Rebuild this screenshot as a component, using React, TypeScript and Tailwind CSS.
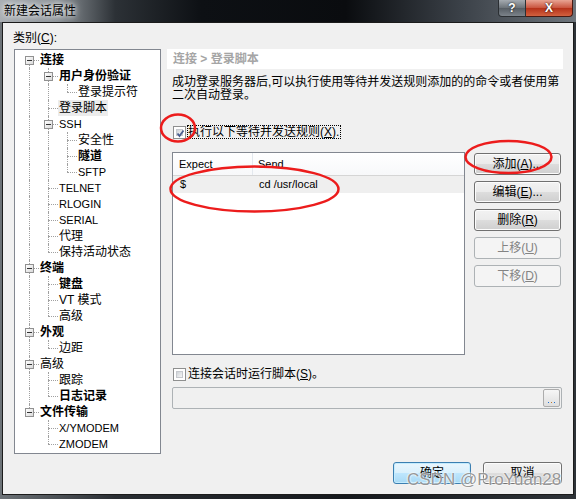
import React from 'react';

type TreeNode = { label: string; bold?: boolean; sel?: boolean; kids?: TreeNode[] };

const tree: TreeNode[] = [
  {
    label: '连接',
    bold: true,
    kids: [
      { label: '用户身份验证', bold: true, kids: [{ label: '登录提示符' }] },
      { label: '登录脚本', sel: true },
      { label: 'SSH', kids: [{ label: '安全性' }, { label: '隧道', bold: true }, { label: 'SFTP' }] },
      { label: 'TELNET' },
      { label: 'RLOGIN' },
      { label: 'SERIAL' },
      { label: '代理' },
      { label: '保持活动状态' },
    ],
  },
  { label: '终端', bold: true, kids: [{ label: '键盘', bold: true }, { label: 'VT 模式' }, { label: '高级' }] },
  { label: '外观', bold: true, kids: [{ label: '边距' }] },
  { label: '高级', kids: [{ label: '跟踪' }, { label: '日志记录', bold: true }] },
  { label: '文件传输', bold: true, kids: [{ label: 'X/YMODEM' }, { label: 'ZMODEM' }] },
];

type Row = { node: TreeNode; trail: boolean[]; first: boolean; last: boolean };

function flatten(nodes: TreeNode[], trail: boolean[], out: Row[]) {
  nodes.forEach((n, i) => {
    const last = i === nodes.length - 1;
    out.push({ node: n, trail, first: trail.length === 0 && i === 0, last });
    if (n.kids) flatten(n.kids, [...trail, !last], out);
  });
  return out;
}

const rows = flatten(tree, [], []);

function TreeRow({ row }: { row: Row }) {
  const { node, trail, first, last } = row;
  const latin = /^[\x00-\x7f]+$/.test(node.label);
  return (
    <div className="flex h-4 items-center">
      {trail.map((cont, i) => (
        <div key={i} className="relative w-[19px] h-4 shrink-0">
          {cont && <div className="absolute left-[9px] top-0 h-4 border-l border-dotted border-[#a0a0a0]" />}
        </div>
      ))}
      <div className="relative w-[19px] h-4 shrink-0">
        {!first && <div className="absolute left-[9px] top-0 h-2 border-l border-dotted border-[#a0a0a0]" />}
        {!last && <div className="absolute left-[9px] top-2 h-2 border-l border-dotted border-[#a0a0a0]" />}
        <div className="absolute left-[9px] top-2 w-[10px] border-t border-dotted border-[#a0a0a0]" />
        {node.kids && (
          <div className="absolute left-[5px] top-[4px] w-[9px] h-[9px] border border-[#919191] bg-[linear-gradient(135deg,#ffffff,#d9d9d9)] flex items-center justify-center">
            <div className="w-[5px] h-px bg-[#333]" />
          </div>
        )}
      </div>
      <span
        className={`px-[1px] leading-4 whitespace-nowrap text-black ${latin ? 'text-[11px]' : 'text-[12px]'} ${
          node.bold ? 'font-bold' : ''
        } ${node.sel ? 'bg-[#ececec]' : ''}`}
      >
        {node.label}
      </span>
    </div>
  );
}

function WinButton({
  children,
  disabled,
  focused,
  className = '',
}: {
  children: React.ReactNode;
  disabled?: boolean;
  focused?: boolean;
  className?: string;
}) {
  const look = disabled
    ? 'border-[#adb2b5] bg-[#f4f4f4] text-[#838383]'
    : focused
    ? 'border-[#3c7fb1] bg-[linear-gradient(#eaf6fd_0%,#d9f0fc_50%,#bee6fd_51%,#a7d9f5_100%)] text-black shadow-[inset_0_0_0_1px_#c4ecfe]'
    : 'border-[#707070] bg-[linear-gradient(#f2f2f2_0%,#ebebeb_50%,#dddddd_51%,#cfcfcf_100%)] text-black shadow-[inset_0_0_0_1px_#fcfcfc]';
  return (
    <div className={`flex items-center justify-center h-[22px] rounded-[3px] border text-[12px] ${look} ${className}`}>
      {children}
    </div>
  );
}

function CheckBox({ checked }: { checked?: boolean }) {
  return (
    <div className="w-[13px] h-[13px] border border-[#8e8f8f] bg-white p-[2px] shrink-0">
      <div className="relative w-full h-full border border-[#c6c9ce] bg-[linear-gradient(135deg,#cfd3d8,#f6f6f6)]">
        {checked && (
          <svg className="absolute -left-[2px] -top-[2px]" width="11" height="11" viewBox="0 0 11 11">
            <path d="M2.5 5.5 L4.5 8 L8.5 2.5" fill="none" stroke="#4a5d8f" strokeWidth="1.8" />
          </svg>
        )}
      </div>
    </div>
  );
}

function Mn({ k }: { k: string }) {
  return (
    <span>
      (<span className="underline underline-offset-1">{k}</span>)
    </span>
  );
}

export default function App() {
  return (
    <div className="relative w-[576px] h-[499px] flex flex-col bg-[linear-gradient(90deg,#6d7378,#2a2e33_20%,#15181c_60%,#2e3338)] [font-family:'Liberation_Sans','Noto_Sans_CJK_SC',sans-serif] overflow-hidden">
      {/* title bar */}
      <div className="h-[22px] shrink-0 flex items-start bg-[linear-gradient(90deg,#a9aeb3_0%,#8b9196_10%,#2c3136_20%,#0d1014_35%,#0a0c0f_60%,#3b4148_80%,#6e757c_100%)]">
        <span className="ml-[4px] mt-[3px] text-[12px] leading-4 text-black [text-shadow:0_0_5px_#fff,0_0_9px_#fff]">
          新建会话属性
        </span>
        <div className="ml-auto mr-[3px] flex">
          <div className="w-[28px] h-[17px] flex items-center justify-center rounded-bl-[4px] border border-t-0 border-[#2b2f33] bg-[linear-gradient(#a4aab0,#6b7278_50%,#565d64_51%,#7c838a)] text-white text-[12px] font-bold [text-shadow:0_0_2px_#000]">
            ?
          </div>
          <div className="w-[47px] h-[17px] flex items-center justify-center rounded-br-[4px] border border-t-0 border-l-0 border-[#4a1a12] bg-[linear-gradient(#e8a493,#c9533d_50%,#b53119_51%,#d2613f)] text-white text-[12px] font-bold [text-shadow:0_0_2px_#000]">
            X
          </div>
        </div>
      </div>

      {/* body */}
      <div className="flex-1 mx-[2px] mb-[4px] border border-[#1b1b1b] bg-[#f0f0f0] flex flex-col pt-[7px] pl-[11px] pr-[10px] pb-[10px]">
        <div className="flex gap-[6px] h-[424px]">
          {/* categories */}
          <div className="w-[147px] flex flex-col">
            <div className="h-[19px] -ml-px text-[12px] leading-4 text-black">
              类别<Mn k="C" />:
            </div>
            <div className="h-[405px] border border-[#828790] bg-white pt-[2px] pl-[5px]">
              {rows.map((r, i) => (
                <TreeRow key={i} row={r} />
              ))}
            </div>
          </div>

          {/* page */}
          <div className="w-[396px] flex flex-col pt-[19px]">
            <div className="h-[20px] bg-white pl-[6px] text-[12px] leading-[20px] font-bold text-[#a5a5a5]">
              连接 &gt; 登录脚本
            </div>
            <div className="mt-[7px] pl-[5px] text-[12px] leading-[13px] text-black whitespace-nowrap">
              成功登录服务器后,可以执行使用等待并发送规则添加的的命令或者使用第
              <br />
              二次自动登录。
            </div>
            <div className="mt-[22px] h-4 pl-[6px] flex items-center">
              <CheckBox checked />
              <span className="ml-px h-[14px] border border-dotted border-black text-[12px] leading-[12px] text-black pr-px">
                执行以下等待并发送规则<Mn k="X" />.
              </span>
            </div>

            <div className="mt-[12px] flex gap-[9px]">
              <div className="ml-[5px] w-[293px] h-[203px] border border-[#828790] bg-white">
                <div className="h-[23px] flex border-b border-[#d5d5d5] bg-[linear-gradient(#ffffff,#f7f8fa)] text-[11px] text-black">
                  <div className="w-[80px] pl-[6px] flex items-center border-r border-[#e3e8ee]">Expect</div>
                  <div className="pl-[5px] flex items-center">Send</div>
                </div>
                <div className="h-[17px] flex items-center bg-[#efefef] text-[11px] text-black">
                  <div className="w-[80px] pl-[7px]">$</div>
                  <div className="pl-[6px]">cd /usr/local</div>
                </div>
              </div>
              <div className="w-[87px] flex flex-col gap-[6px] mt-px">
                <WinButton>
                  添加<Mn k="A" />...
                </WinButton>
                <WinButton>
                  编辑<Mn k="E" />...
                </WinButton>
                <WinButton>
                  删除<Mn k="R" />
                </WinButton>
                <WinButton disabled>
                  上移<Mn k="U" />
                </WinButton>
                <WinButton disabled>
                  下移<Mn k="D" />
                </WinButton>
              </div>
            </div>

            <div className="mt-[11px] h-4 pl-[6px] flex items-center">
              <CheckBox />
              <span className="ml-[2px] text-[12px] leading-4 text-black">
                连接会话时运行脚本<Mn k="S" />。
              </span>
            </div>
            <div className="mt-[5px] ml-[5px] w-[390px] h-[22px] border border-[#adb2b5] rounded-[2px] bg-[#f0f0f0] flex items-center justify-end pr-px">
              <div className="w-[17px] h-[18px] border border-[#acacac] rounded-[2px] bg-[linear-gradient(#f6f6f6,#dedede)] flex items-end justify-center pb-[3px] gap-[2px]">
                <div className="w-px h-px bg-[#1e6fd0]" />
                <div className="w-px h-px bg-[#c07a2a]" />
                <div className="w-px h-px bg-[#1e6fd0]" />
              </div>
            </div>
          </div>
        </div>

        {/* dialog buttons */}
        <div className="mt-[8px] flex justify-end gap-[12px] mr-px">
          <WinButton focused className="w-[78px]">
            确定
          </WinButton>
          <WinButton className="w-[79px]">取消</WinButton>
        </div>
      </div>

      {/* annotations */}
      <svg className="absolute left-0 top-0 pointer-events-none" width="576" height="499">
        <ellipse cx="178" cy="128" rx="17" ry="13.5" fill="none" stroke="#ec1c1c" strokeWidth="2.5" />
        <ellipse cx="254.5" cy="189" rx="84" ry="22.5" fill="none" stroke="#ec1c1c" strokeWidth="2.5" />
        <ellipse cx="508.5" cy="157" rx="43" ry="16" fill="none" stroke="#ec1c1c" strokeWidth="2.5" />
      </svg>
      <div className="absolute left-[407px] top-[470px] text-[17px] leading-5 text-[#8a8a8a]/90 [text-shadow:0_0_2px_#fff,0_0_2px_#fff] pointer-events-none whitespace-nowrap">
        CSDN @ProYuan28
      </div>
    </div>
  );
}
